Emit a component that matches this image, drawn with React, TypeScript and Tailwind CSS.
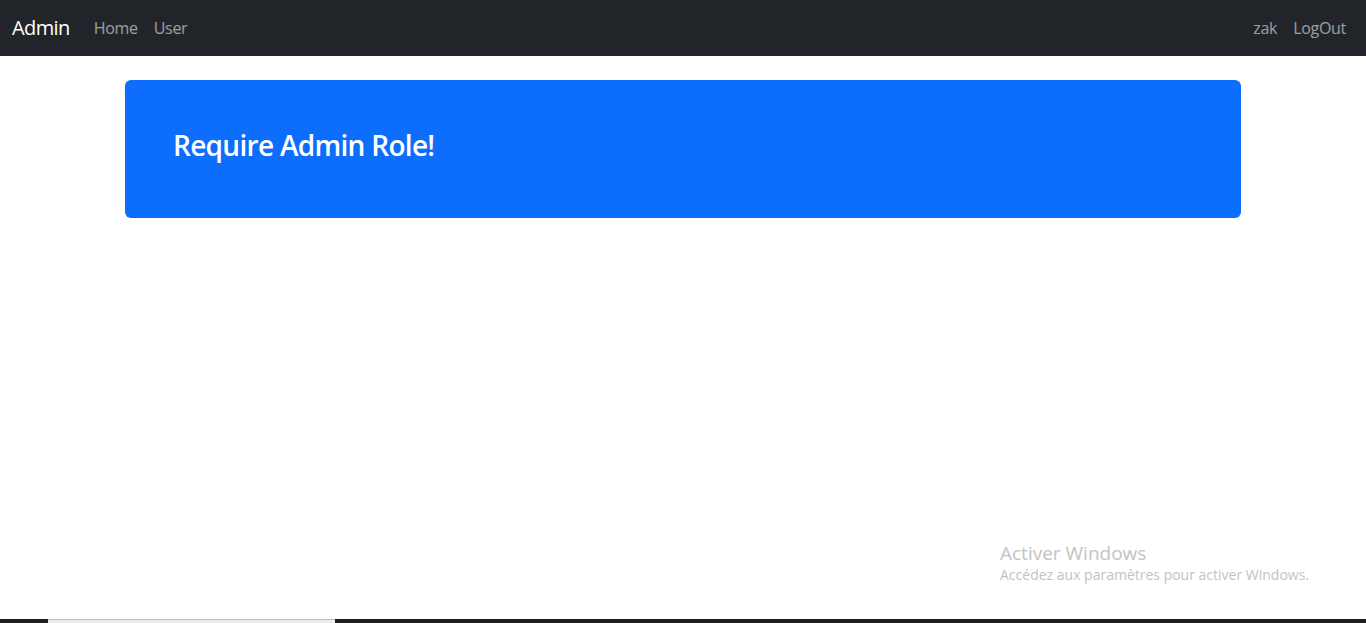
import React from "react";

const font = { fontFamily: '"Open Sans", "Noto Sans", sans-serif' };

const NavLink = ({ label }: { label: string }) => (
  <a href="#" className="px-2 text-[16px] leading-6 tracking-[-0.3px] text-white/55 hover:text-white/75">
    {label}
  </a>
);

export default function App() {
  return (
    <div className="relative flex h-[623px] flex-col overflow-hidden bg-white" style={font}>
      {/* Navbar */}
      <nav className="flex h-14 shrink-0 items-center bg-[#212529] px-3">
        <a href="#" className="mr-4 text-[20px] leading-[30px] tracking-[-0.6px] text-white">
          Admin
        </a>
        <div className="flex items-center">
          <NavLink label="Home" />
          <NavLink label="User" />
        </div>
        <div className="ml-auto flex items-center">
          <NavLink label="zak" />
          <NavLink label="LogOut" />
        </div>
      </nav>

      {/* Content */}
      <main className="grow">
        <div className="mx-auto mt-6 w-[1140px] px-3">
          <div className="rounded-md bg-[#0d6efd] p-12">
            <h3 className="mb-2 text-[28px] font-semibold leading-[34px] tracking-[-0.7px] text-white">
              Require Admin Role!
            </h3>
          </div>
        </div>
      </main>

      {/* Windows activation watermark */}
      <div className="pointer-events-none absolute left-[1000px] top-[541px] text-[#c3c3c3]">
        <div className="text-[19px] leading-6">Activer Windows</div>
        <div className="text-[14px] leading-5">Accédez aux paramètres pour activer Windows.</div>
      </div>

      {/* Bottom strip */}
      <div className="flex h-1 shrink-0 bg-[#1e1e1e]">
        <div className="ml-12 w-[287px] border-t border-[#bdbdbd] bg-[#ececec]" />
      </div>
    </div>
  );
}
